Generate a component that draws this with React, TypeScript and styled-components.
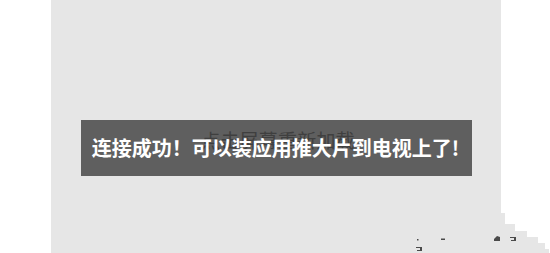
import React from "react";
import styled, { createGlobalStyle } from "styled-components";

const GlobalStyle = createGlobalStyle`
  html, body {
    margin: 0;
    padding: 0;
    background: #ffffff;
  }
  body {
    font-family: "Noto Sans CJK SC", "Noto Sans", sans-serif;
  }
`;

const Page = styled.div`
  position: relative;
  width: 550px;
  height: 253px;
  display: flex;
  align-items: stretch;
  overflow: hidden;
  background: #ffffff;
`;

const Panel = styled.div`
  position: relative;
  margin-left: 51px;
  width: 450px;
  height: 253px;
  background: #e6e6e6;
  display: flex;
  flex-direction: column;
  align-items: center;
  padding-top: 130px;
  box-sizing: border-box;
`;

const ReloadHint = styled.div`
  font-family: "Noto Sans CJK SC", sans-serif;
  font-size: 19px;
  line-height: 19px;
  color: #999999;
  margin-left: 4px;
  letter-spacing: 0.2px;
`;

const Toast = styled.div`
  position: absolute;
  left: 30px;
  top: 120px;
  width: 391px;
  height: 56px;
  background: rgba(0, 0, 0, 0.59);
  display: flex;
  align-items: center;
  justify-content: center;
`;

const ToastText = styled.span`
  font-family: "Noto Sans CJK SC", sans-serif;
  font-weight: 700;
  font-size: 20px;
  line-height: 20px;
  color: #ffffff;
  white-space: nowrap;
  margin-right: 2px;
`;

const Scrap = styled.svg`
  position: absolute;
  left: 0;
  top: 0;
  pointer-events: none;
`;

export default function App() {
  return (
    <>
      <GlobalStyle />
      <Page>
        <Panel>
          <ReloadHint>点击屏幕重新加载</ReloadHint>
          <Toast>
            <ToastText>连接成功！可以装应用推大片到电视上了!</ToastText>
          </Toast>
        </Panel>
        <Scrap width="550" height="253" viewBox="0 0 550 253">
          <polygon
            points="500,213 505,213 505,224 515,224 515,231 527,231 527,237 538,237 538,243 545,243 545,249 549,249 549,253 500,253"
            fill="#e6e6e6"
          />
          <g fill="#4a4a4a">
            <rect x="417" y="239" width="1.5" height="1.5" />
            <rect x="441" y="238.5" width="4" height="1.5" />
            <path d="M494 239 L497 236 L500 237 L500 241 L494 241 Z" />
            <path d="M510 237 L516 237 L516 241 L511 241 L511 240 L514 240 L514 238 L510 238 Z" />
            <path d="M416 247 L422 247 L422 251 L417 251 L417 250 L420 250 L420 248 L416 248 Z" />
          </g>
        </Scrap>
      </Page>
    </>
  );
}
